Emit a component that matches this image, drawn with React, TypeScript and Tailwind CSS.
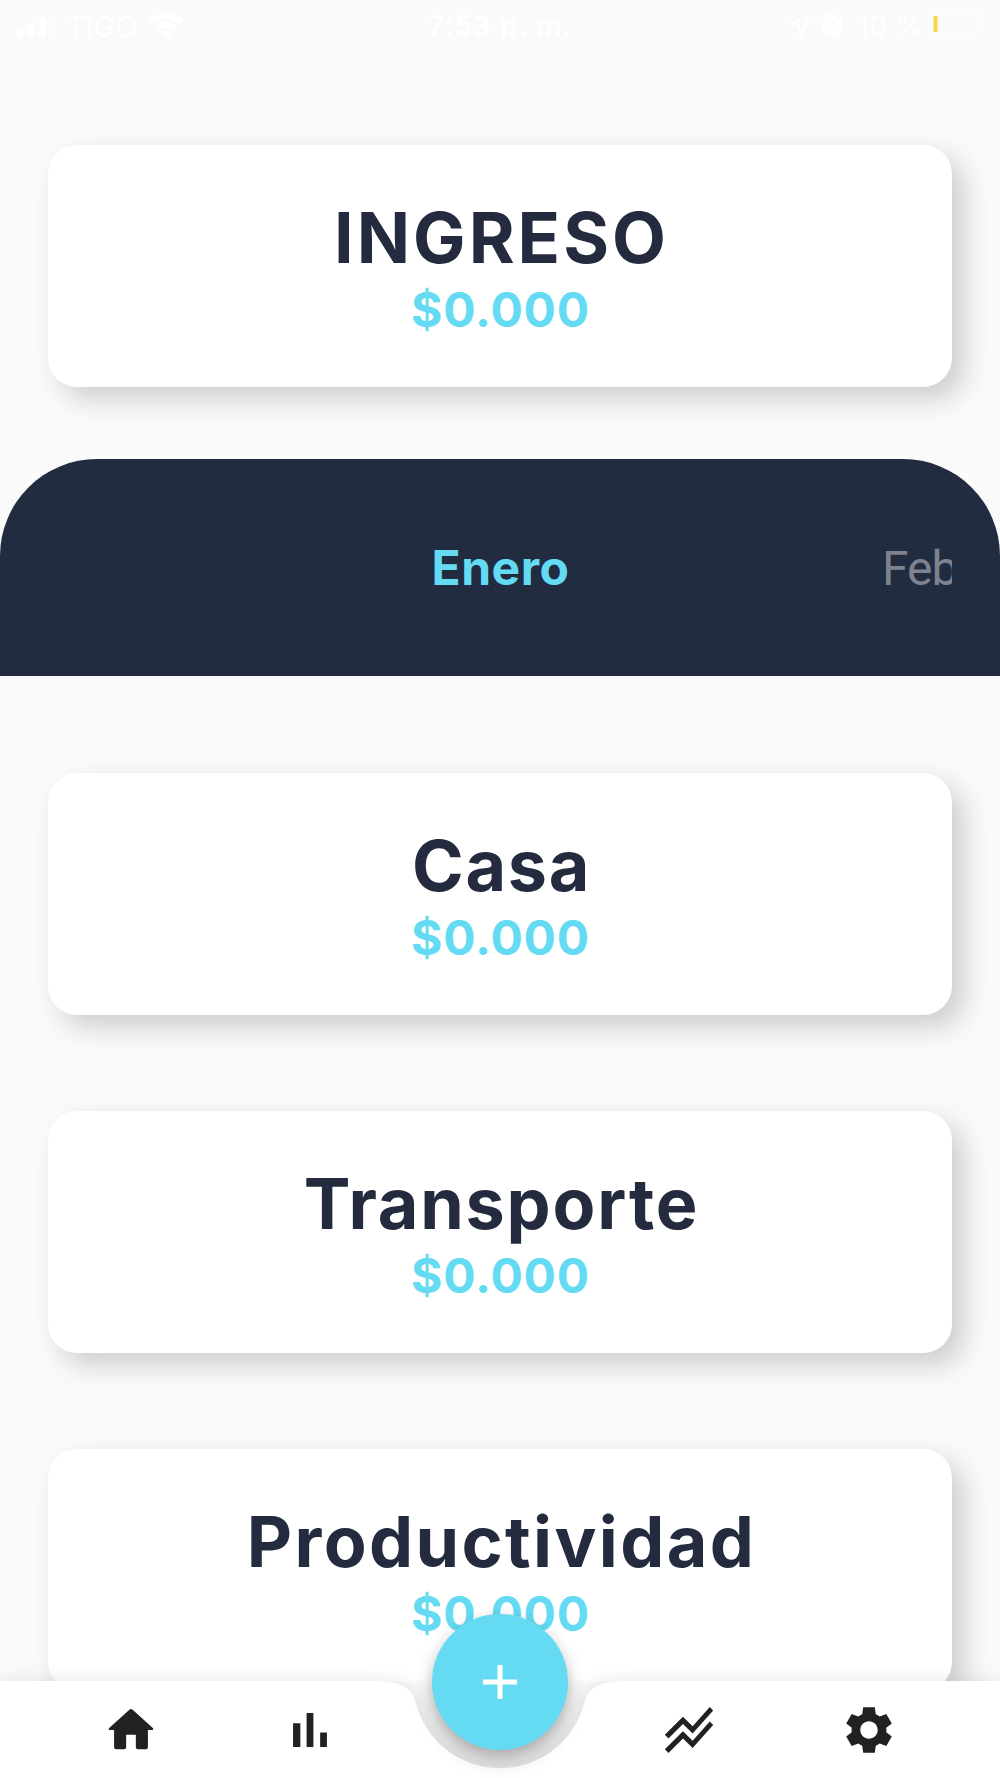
import type { ReactNode } from "react";

type Category = { name: string; amount: string; tracking: string };

const income: Category = { name: "INGRESO", amount: "$0.000", tracking: "tracking-[3px]" };

const categories: Category[] = [
  { name: "Casa", amount: "$0.000", tracking: "tracking-[1.7px]" },
  { name: "Transporte", amount: "$0.000", tracking: "tracking-[1.8px]" },
  { name: "Productividad", amount: "$0.000", tracking: "tracking-[2.4px]" },
];

export default function App() {
  return (
    <div className="relative flex h-[1778px] w-[1000px] flex-col overflow-hidden bg-[#fafafa] font-['Inter',sans-serif]">
      <StatusBar />
      <main className="flex h-[1629px] shrink-0 flex-col overflow-hidden pt-[93px]">
        <div className="px-12">
          <AmountCard item={income} />
        </div>
        <MonthPicker />
        <div className="flex flex-col gap-[96.5px] px-12 pt-[97px]">
          {categories.map((item) => (
            <AmountCard key={item.name} item={item} />
          ))}
        </div>
      </main>
      <BottomBar />
    </div>
  );
}

function StatusBar() {
  return (
    <header className="grid h-[52px] shrink-0 grid-cols-3 items-center pr-2.5 pl-4 text-[29px] leading-none text-white">
      <div className="flex items-center">
        <svg className="h-6 w-[42px]" viewBox="0 0 42 24" fill="currentColor">
          <rect x="0" y="14" width="7" height="9.5" rx="2" />
          <rect x="11.5" y="10" width="7" height="13.5" rx="2" />
          <rect x="23" y="4" width="7" height="19.5" rx="2" />
          <rect x="34.5" y="0" width="7" height="23.5" rx="2" opacity="0.2" />
        </svg>
        <span className="ml-[9px] w-[72px]">TIGO</span>
        <svg className="ml-[9px] h-[26px] w-9" viewBox="0 0 36 26" fill="currentColor">
          <path d="M18 0C11 0 4.700 2.700 0 7.200l3.600 4.200C7.400 7.800 12.400 5.600 18 5.600s10.600 2.200 14.400 5.800L36 7.200C31.300 2.700 25 0 18 0z" />
          <path d="M18 9c-4.500 0-8.600 1.700-11.700 4.600l3.700 4.200c2.100-2 4.900-3.200 8-3.200s5.900 1.200 8 3.200l3.700-4.200C26.600 10.700 22.500 9 18 9z" />
          <path d="M18 18c-2 0-3.800.8-5.200 2L18 26l5.200-6c-1.400-1.200-3.200-2-5.200-2z" />
        </svg>
      </div>
      <div className="-mt-0.5 pr-1.5 text-center font-semibold tracking-[0.6px] whitespace-nowrap">7:53 p. m.</div>
      <div className="flex items-center justify-end">
        <svg className="-mt-0.5 h-[23px] w-[23px]" viewBox="0 0 23 23" fill="none" stroke="currentColor" strokeWidth="2.400" strokeLinejoin="round">
          <path d="M21.500 1.500 1.500 9.800l9.500 1.700 1.200 10z" />
        </svg>
        <svg className="-mt-0.5 ml-[11px] h-6 w-[22px]" viewBox="0 0 22 24">
          <circle cx="11" cy="13" r="10.500" fill="currentColor" />
          <path d="M1 5l5-4M21 5l-5-4M4 23l2-2M18 23l-2-2" stroke="currentColor" strokeWidth="3" />
          <path d="M11 7v6H6" fill="none" stroke="#fafafa" strokeWidth="1.800" />
        </svg>
        <span className="-mt-0.5 ml-[13px] whitespace-nowrap">10 %</span>
        <svg className="-mt-1 ml-1 h-7 w-[62px]" viewBox="0 0 62 28">
          <rect x="1" y="1" width="52" height="26" rx="7" fill="none" stroke="currentColor" strokeWidth="2" opacity="0.35" />
          <path d="M56 10c5 1 5 7 0 8z" fill="currentColor" opacity="0.35" />
          <rect x="5.5" y="6" width="4" height="16" rx="1" fill="#f8d648" />
        </svg>
      </div>
    </header>
  );
}

function AmountCard({ item }: { item: Category }) {
  return (
    <section className="flex h-[241.5px] shrink-0 flex-col items-center rounded-[29px] bg-white pt-[51px] shadow-[12px_12px_28px_rgba(0,0,0,0.18)]">
      <h2 className={`pl-[3px] text-[70px] leading-[84px] font-bold text-[#242b3e] ${item.tracking}`}>{item.name}</h2>
      <p className="mt-px pl-px text-[48px] leading-[58px] font-bold tracking-[0.8px] text-[#64dbf2]">{item.amount}</p>
    </section>
  );
}

function MonthPicker() {
  return (
    <section className="mt-[72.5px] h-[217px] shrink-0 rounded-t-[97px] bg-[#222c40] px-12">
      <div className="flex h-full items-center overflow-hidden text-[48px]">
        <div className="w-[904px] shrink-0 pl-px text-center font-bold tracking-[0.5px] text-[#64dbf2]">Enero</div>
        <div className="mt-0.5 -ml-[70px] shrink-0 font-['Roboto',sans-serif] tracking-[-1px] text-[#7d828d]">Febrero</div>
      </div>
    </section>
  );
}

function NavIcon({ children }: { children: ReactNode }) {
  return (
    <button className="h-[58px] w-[58px] text-[#212121]">
      <svg className="h-full w-full" viewBox="0 0 24 24" fill="currentColor">
        {children}
      </svg>
    </button>
  );
}

function BottomBar() {
  return (
    <nav className="absolute bottom-0 left-0 h-[97px] w-full">
      <svg className="absolute inset-0 h-full w-full overflow-visible" viewBox="0 0 1000 97">
        <defs>
          <linearGradient id="notch" x1="0" y1="0" x2="0" y2="1">
            <stop offset="0" stopColor="#fafafa" />
            <stop offset="0.5" stopColor="#f0f0f0" />
            <stop offset="1" stopColor="#ececec" />
          </linearGradient>
        </defs>
        <rect x="374" y="0" width="252" height="97" fill="url(#notch)" />
        <path
          className="drop-shadow-[0_0_9px_rgba(0,0,0,0.1)]"
          d="M0 0H374.400Q410.600 0 415.300 20A87 87 0 0 0 584.700 20Q589.400 0 625.600 0H1000V97H0z"
          fill="#fff"
        />
      </svg>
      <div className="relative flex justify-between px-[102px] pt-[19.5px]">
        <div className="flex gap-[121px]">
          <NavIcon>
            <path d="M10 19v-5h4v5c0 .55.45 1 1 1h3c.55 0 1-.45 1-1v-7h1.700c.46 0 .68-.57.33-.87L12.670 3.600c-.38-.34-.96-.34-1.340 0l-8.360 7.530c-.34.3-.13.87.33.87H5v7c0 .55.45 1 1 1h3c.55 0 1-.45 1-1z" />
          </NavIcon>
          <NavIcon>
            <path d="M5 9.200h3V19H5zM10.600 5h2.800v14h-2.800zM16.200 13H19v6h-2.800z" />
          </NavIcon>
        </div>
        <div className="flex gap-[122px]">
          <NavIcon>
            <path d="M2 19.990l7.500-7.510 4 4 7.090-7.970L22 9.920l-8.500 9.560-4-4-6 6.010zM3.500 15.490l6-6.010 4 4L22 3.920l-1.410-1.410-7.090 7.970-4-4L2 13.990z" />
          </NavIcon>
          <NavIcon>
            <path d="M19.140 12.940c.04-.3.06-.61.06-.94 0-.32-.02-.64-.07-.94l2.300-1.780-2.280-3.950-2.720 1.090c-.5-.38-1.030-.7-1.620-.94l-.41-2.900H9.600l-.41 2.900c-.59.24-1.130.57-1.620.94L4.850 5.330 2.570 9.280l2.300 1.780c-.05.3-.09.63-.09.94s.02.64.07.94l-2.280 1.780 2.280 3.950 2.720-1.090c.5.38 1.030.7 1.620.94l.41 2.900h4.800l.41-2.900c.59-.24 1.130-.56 1.620-.94l2.720 1.090 2.280-3.950zM12 15.600c-1.980 0-3.600-1.620-3.600-3.600s1.620-3.600 3.600-3.600 3.600 1.620 3.600 3.600-1.620 3.600-3.600 3.600z" />
          </NavIcon>
        </div>
      </div>
      <button className="absolute -top-[67.5px] left-[432px] flex h-[136px] w-[136px] items-center justify-center rounded-full bg-[#64dbf2] shadow-[0_10px_20px_rgba(0,0,0,0.2),0_4px_12px_rgba(0,0,0,0.12)]">
        <svg className="h-[34px] w-[34px]" viewBox="0 0 34 34" stroke="#fff" strokeWidth="5">
          <path d="M17 0v34M0 17h34" />
        </svg>
      </button>
    </nav>
  );
}
